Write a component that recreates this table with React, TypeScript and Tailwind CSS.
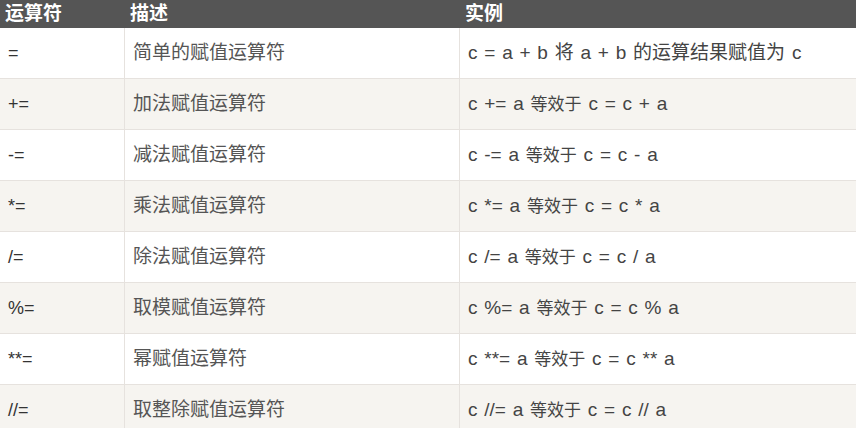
import React from "react";

const rows: [string, string, string][] = [
  ["=", "简单的赋值运算符", "c = a + b 将 a + b 的运算结果赋值为 c"],
  ["+=", "加法赋值运算符", "c += a 等效于 c = c + a"],
  ["-=", "减法赋值运算符", "c -= a 等效于 c = c - a"],
  ["*=", "乘法赋值运算符", "c *= a 等效于 c = c * a"],
  ["/=", "除法赋值运算符", "c /= a 等效于 c = c / a"],
  ["%=", "取模赋值运算符", "c %= a 等效于 c = c % a"],
  ["**=", "幂赋值运算符", "c **= a 等效于 c = c ** a"],
  ["//=", "取整除赋值运算符", "c //= a 等效于 c = c // a"],
];

function Example({ text, big }: { text: string; big: boolean }) {
  const parts = text.split(/([\u4e00-\u9fff]+)/).filter((p) => p.length > 0);
  return (
    <span className="whitespace-pre">
      {parts.map((p, i) =>
        /[\u4e00-\u9fff]/.test(p) ? (
          <span key={i} className={big ? "text-[19px]" : "text-[17px]"}>
            {p}
          </span>
        ) : (
          <span
            key={i}
            className={big ? "text-[19px] [word-spacing:1.5px]" : "text-[19px] [word-spacing:1.5px]"}
          >
            {p}
          </span>
        )
      )}
    </span>
  );
}

export default function App() {
  return (
    <div
      className="w-[862px] h-[428px] overflow-hidden bg-white"
      style={{ fontFamily: '"Liberation Sans", Arial, "Noto Sans CJK SC", sans-serif' }}
    >
      <div className="w-[856px]">
        <div className="grid grid-cols-[125px_335px_396px] h-[28px] bg-[#555555] text-white font-bold text-[19px] leading-[28px]">
          <div className="pl-[5px]">运算符</div>
          <div className="pl-[5px]">描述</div>
          <div className="pl-[5px]">实例</div>
        </div>
        {rows.map((r, i) => (
          <div
            key={i}
            className={`grid grid-cols-[125px_335px_396px] h-[51px] border-b border-[#e6e2de] ${
              i % 2 === 0 ? "bg-white" : "bg-[#f6f4f0]"
            }`}
          >
            <div className="pl-[8px] pt-[1px] flex items-center text-[18px] text-[#333] border-r border-[#e6e2de]">
              {r[0]}
            </div>
            <div className="pl-[8px] pt-[1px] flex items-center text-[19px] text-[#555] border-r border-[#e6e2de]">
              {r[1]}
            </div>
            <div className="pl-[8px] pt-[1px] flex items-center text-[#444]">
              <Example text={r[2]} big={i === 0} />
            </div>
          </div>
        ))}
      </div>
    </div>
  );
}
